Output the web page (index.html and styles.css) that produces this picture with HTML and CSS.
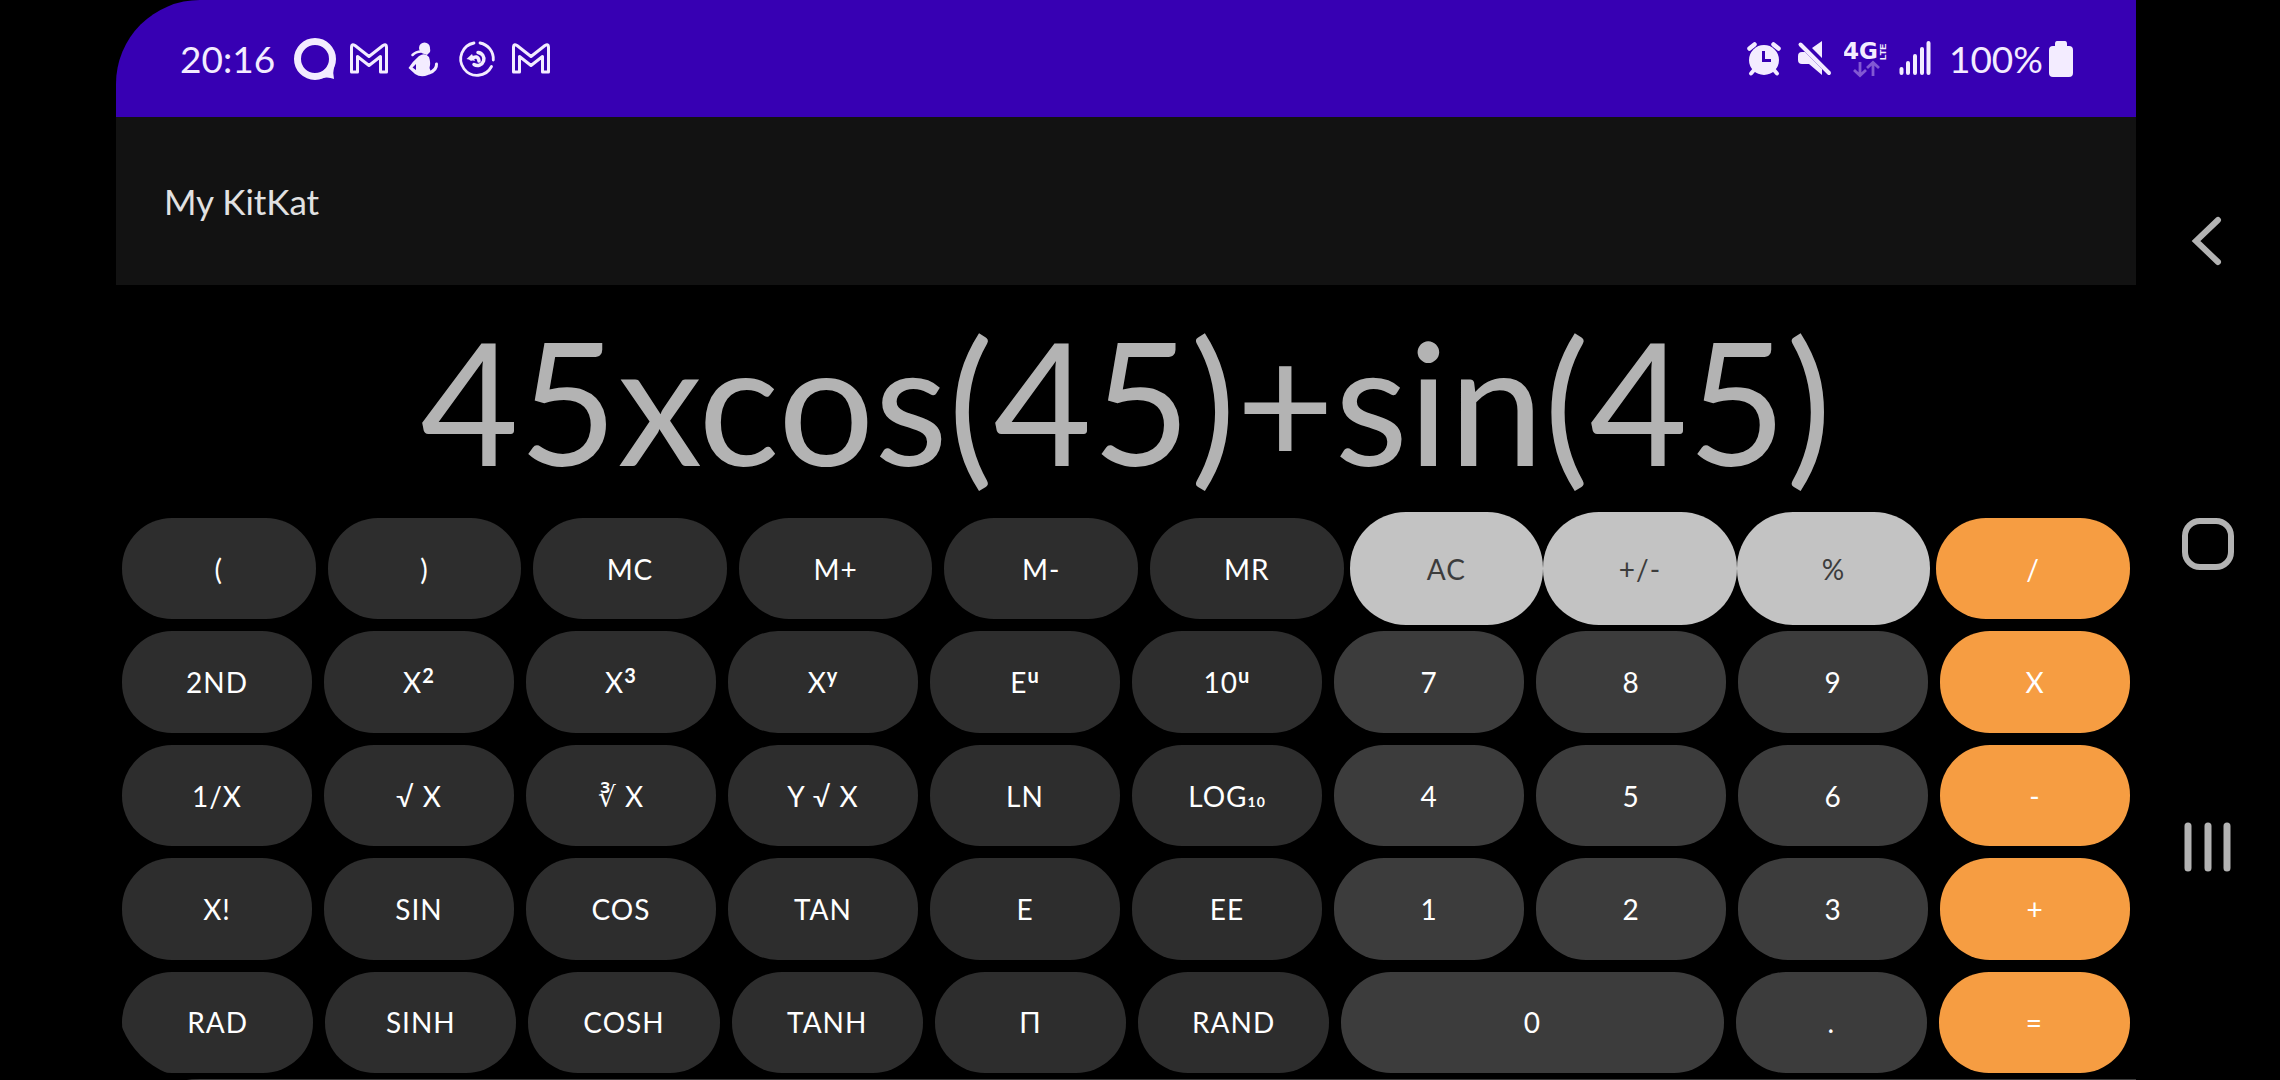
FILE: index.html
```html
<!DOCTYPE html>
<html lang="en">
<head>
<meta charset="utf-8">
<meta name="viewport" content="width=device-width, initial-scale=1">
<title>My KitKat</title>
<link rel="stylesheet" href="styles.css">
</head>
<body>
<svg class="defs" aria-hidden="true">
  <symbol id="mail" viewBox="0 0 44 44">
    <path d="M4.500 35V10Q4.500 6.500 8 8.500L22 19.500 36 8.500Q39.500 6.500 39.500 10V35H33.500V19.500L22 28.500 10.500 19.500V35Z" fill="none" stroke="currentColor" stroke-width="3" stroke-linejoin="round"/>
  </symbol>
</svg>
<div class="device">
  <main class="screen">
    <header class="status">
      <div class="status-left">
        <time class="clock">20:16</time>
        <div class="notices">
          <svg class="icon" viewBox="0 0 44 44"><circle cx="22" cy="22" r="17.500" fill="none" stroke="currentColor" stroke-width="7"/><path d="M41 30Q39.500 36 41 42Q34 39 26 42L32 32Z" fill="currentColor"/></svg>
          <svg class="icon"><use href="#mail"/></svg>
          <svg class="icon" viewBox="0 0 44 44"><g fill="currentColor"><circle cx="23.500" cy="11" r="5.500"/><path d="M27 9Q30 11 29 15L26 18 21 16Z"/><path fill-rule="evenodd" d="M18 19Q24 15 28 20Q30 26 28.500 31Q31 36 27 38Q20 41 14 37L7.500 31Q12 24 18 19ZM15 27L11.500 30.500 15 33Z"/></g><path d="M11.500 18Q15 14.500 20 14.500" fill="none" stroke="currentColor" stroke-width="2.500" stroke-linecap="round"/><path d="M35.500 27Q36 33 28 36" fill="none" stroke="currentColor" stroke-width="3" stroke-linecap="round"/></svg>
          <svg class="icon" viewBox="0 0 44 44"><g fill="none" stroke="currentColor" stroke-width="2.800" stroke-linecap="round"><path d="M25 6A16.300 16.300 0 0 1 38.300 23M36.500 29.500A16.300 16.300 0 1 1 19 6"/><path d="M23 15.500A6.500 6.500 0 1 1 19 27.500" stroke-width="3.500"/><path d="M16 22Q23 17 24 24" stroke-width="3.500"/></g><path d="M11.500 22L17 17 20 24Z" fill="currentColor"/></svg>
          <svg class="icon"><use href="#mail"/></svg>
        </div>
      </div>
      <div class="status-right">
        <div class="signals">
          <svg class="icon" viewBox="0 0 44 44"><circle cx="22" cy="23" r="15" fill="currentColor"/><path d="M7.500 11.500L12.500 7.500M36.500 11.500L31.500 7.500" stroke="currentColor" stroke-width="4.500" stroke-linecap="round"/><path d="M12 33L9 36.500M32 33L35 36.500" stroke="currentColor" stroke-width="4" stroke-linecap="round"/><path d="M21.500 14V23.500H29" fill="none" stroke="#3700b3" stroke-width="3"/></svg>
          <svg class="icon" viewBox="0 0 44 44"><path d="M5 19Q5 15 9 15H15L29 29V38L16 27H9Q5 27 5 23ZM19 11L29 4V21Z" fill="currentColor"/><path d="M8 6L37 35" stroke="#3700b3" stroke-width="7"/><path d="M7.500 7.500L36 36" stroke="currentColor" stroke-width="4" stroke-linecap="round"/></svg>
          <svg class="icon" viewBox="0 0 44 44"><text class="net" x="-1" y="22">4G</text><text class="lte" transform="translate(42 23) rotate(-90)">LTE</text><path d="M16 25V38M10 33L16 38.500 22 33M29 39V26M23 31L29 25.500 35 31" fill="none" stroke="#8258d3" stroke-width="2.800"/></svg>
          <svg class="icon" viewBox="0 0 44 44"><path d="M6.500 32V36M13 26V36M20 19V36M27 12V36M33.500 6V36" stroke="currentColor" stroke-width="4" stroke-linecap="round"/></svg>
        </div>
        <span class="clock">100%</span>
        <svg class="battery" viewBox="0 0 24 36"><path d="M8 0H16Q18 0 18 3V5H20Q24 5 24 9V32Q24 36 20 36H4Q0 36 0 32V9Q0 5 4 5H6V3Q6 0 8 0Z" fill="currentColor"/></svg>
      </div>
    </header>
    <div class="appbar"><h1 class="title">My KitKat</h1></div>
    <output class="display">45xcos(45)+sin(45)</output>
    <section class="keypad" aria-label="Calculator keys">
      <div class="row">
        <button class="key">(</button><button class="key">)</button><button class="key">MC</button><button class="key">M+</button><button class="key">M-</button><button class="key">MR</button><button class="key light">AC</button><button class="key light">+/-</button><button class="key light">%</button><button class="key op">/</button>
      </div>
      <div class="row">
        <button class="key">2ND</button><button class="key">X<sup class="sup">2</sup></button><button class="key">X<sup class="sup">3</sup></button><button class="key">X<sup class="sup">y</sup></button><button class="key">E<sup class="sup">u</sup></button><button class="key">10<sup class="sup">u</sup></button><button class="key num">7</button><button class="key num">8</button><button class="key num">9</button><button class="key op">X</button>
      </div>
      <div class="row">
        <button class="key">1/X</button><button class="key">√ X</button><button class="key">∛ X</button><button class="key">Y √ X</button><button class="key">LN</button><button class="key">LOG<sub class="sub">10</sub></button><button class="key num">4</button><button class="key num">5</button><button class="key num">6</button><button class="key op">-</button>
      </div>
      <div class="row">
        <button class="key">X!</button><button class="key">SIN</button><button class="key">COS</button><button class="key">TAN</button><button class="key">E</button><button class="key">EE</button><button class="key num">1</button><button class="key num">2</button><button class="key num">3</button><button class="key op">+</button>
      </div>
      <div class="row">
        <button class="key">RAD</button><button class="key">SINH</button><button class="key">COSH</button><button class="key">TANH</button><button class="key">Π</button><button class="key">RAND</button><button class="key num wide">0</button><button class="key num">.</button><button class="key op">=</button>
      </div>
    </section>
  </main>
  <nav class="nav" aria-label="System navigation">
    <button class="nav-btn" aria-label="Back"><svg class="nav-icon" viewBox="0 0 56 56"><path d="M38 7L16 28 38 49" fill="none" stroke="currentColor" stroke-width="6" stroke-linecap="round"/></svg></button>
    <button class="nav-btn" aria-label="Home"><svg class="nav-icon" viewBox="0 0 56 56"><rect x="5" y="5" width="46" height="46" rx="15" fill="none" stroke="currentColor" stroke-width="6"/></svg></button>
    <button class="nav-btn" aria-label="Recent apps"><svg class="nav-icon" viewBox="0 0 56 56"><path d="M8 7V49M28 7V49M47 7V49" stroke="currentColor" stroke-width="7" stroke-linecap="round"/></svg></button>
  </nav>
</div>
</body>
</html>
```
FILE: styles.css
```css
* { box-sizing: border-box; }

body {
  margin: 0;
  background: #000;
  color: #fff;
  font-family: Lato, "Open Sans", sans-serif;
}

button {
  border: 0;
  padding: 0;
  background: none;
  color: inherit;
  font: inherit;
}

.defs { display: none; }

.device {
  display: flex;
  min-height: 100vh;
  padding-left: 116px;
}

.screen {
  flex: 1;
  display: flex;
  flex-direction: column;
  overflow: hidden;
  border-radius: 84px 0 0 84px;
}

.status {
  display: flex;
  align-items: center;
  justify-content: space-between;
  height: 117px;
  padding: 0 63px 0 64px;
  background: #3700b3;
  color: #f3ecff;
}

.status-left,
.status-right {
  display: flex;
  align-items: center;
}

.status-left { gap: 18px; }
.status-right { gap: 6px; }
.notices { display: flex; gap: 10px; }
.signals { display: flex; gap: 7px; padding-right: 4px; }

.clock {
  font-size: 37px;
  line-height: 44px;
}

.icon { width: 44px; height: 44px; }
.battery { width: 24px; height: 36px; }

.net {
  fill: currentColor;
  font: bold 23px "DejaVu Sans", sans-serif;
}

.lte {
  fill: currentColor;
  font: bold 9px "Liberation Sans", sans-serif;
}

.appbar {
  display: flex;
  align-items: center;
  height: 168px;
  padding: 0 48px;
  background: #121212;
}

.title {
  margin: 0;
  color: #e1e1e1;
  font-size: 35px;
  font-weight: 400;
}

.display {
  height: 227px;
  color: #b3b3b3;
  font-size: 170px;
  line-height: 230px;
  text-align: center;
  white-space: nowrap;
}

.keypad {
  flex: 1;
  display: flex;
  flex-direction: column;
  border-bottom: 1px solid #3c3c3c;
}

.row {
  flex: 1;
  display: flex;
  min-height: 112px;
}

.key {
  flex: 1 1 0;
  min-width: 0;
  margin: 6px;
  border-radius: 50px;
  background: #2d2d2d;
  font-size: 28px;
  line-height: 36px;
  letter-spacing: 1px;
  white-space: nowrap;
}

.num { background: #3c3c3c; }
.op { background: #f69d42; }
.wide { flex-grow: 2; }

.light {
  margin: 0;
  border-radius: 56px;
  background: #c3c3c3;
  color: #3c3c3c;
}

.sup,
.sub {
  font-weight: 700;
  line-height: 0;
}

.sup { font-size: 20px; }
.sub { font-size: 14px; vertical-align: baseline; }

.nav {
  display: flex;
  flex-direction: column;
  width: 144px;
  padding: 90px 0 82px;
  color: #b3b3b3;
}

.nav-btn {
  flex: 1;
  display: flex;
  align-items: center;
  justify-content: center;
}

.nav-icon { width: 56px; height: 56px; }
```
